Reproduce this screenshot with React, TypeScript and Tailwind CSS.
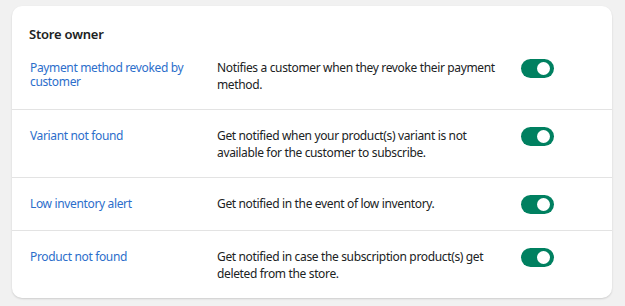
const rows = [
  {
    title: 'Payment method revoked by customer',
    text: 'Notifies a customer when they revoke their payment method.',
  },
  {
    title: 'Variant not found',
    text: 'Get notified when your product(s) variant is not available for the customer to subscribe.',
  },
  {
    title: 'Low inventory alert',
    text: 'Get notified in the event of low inventory.',
  },
  {
    title: 'Product not found',
    text: 'Get notified in case the subscription product(s) get deleted from the store.',
  },
];

function Toggle() {
  return (
    <button className="flex h-[19px] w-[33px] shrink-0 items-center justify-end rounded-full bg-[#008060] pr-[4px]">
      <span className="h-[13px] w-[13px] rounded-full bg-white" />
    </button>
  );
}

export default function App() {
  return (
    <div
      className="min-h-[306px] bg-[#f1f1f1] px-[12px] pt-[6px] pb-[8px] text-[#202223]"
      style={{ fontFamily: '"Noto Sans", "Open Sans", sans-serif' }}
    >
      <div className="w-[600px] rounded-[10px] bg-white shadow-[0_1px_2px_rgba(0,0,0,0.15)]">
        {/* Header */}
        <div className="px-[17px] pt-[18px] text-[13px] font-semibold leading-[20px] tracking-[-0.2px]">
          Store owner
        </div>

        {rows.map((row, i) => (
          <div
            key={row.title}
            className={
              'flex items-start px-[18px] pb-[16px] ' +
              (i === 0 ? 'pt-[15px]' : 'border-t border-[#e3e3e3] pt-[17px]')
            }
          >
            <div className="w-[187px] shrink-0 pt-[2px] pr-[20px] text-[12px] leading-[14px] tracking-[-0.35px] text-[#2c6ecb]">
              {row.title}
            </div>
            <div className="w-[304px] shrink-0 pr-[19px] text-[12px] leading-[17px] tracking-[-0.35px]">{row.text}</div>
            <Toggle />
          </div>
        ))}
      </div>
    </div>
  );
}
